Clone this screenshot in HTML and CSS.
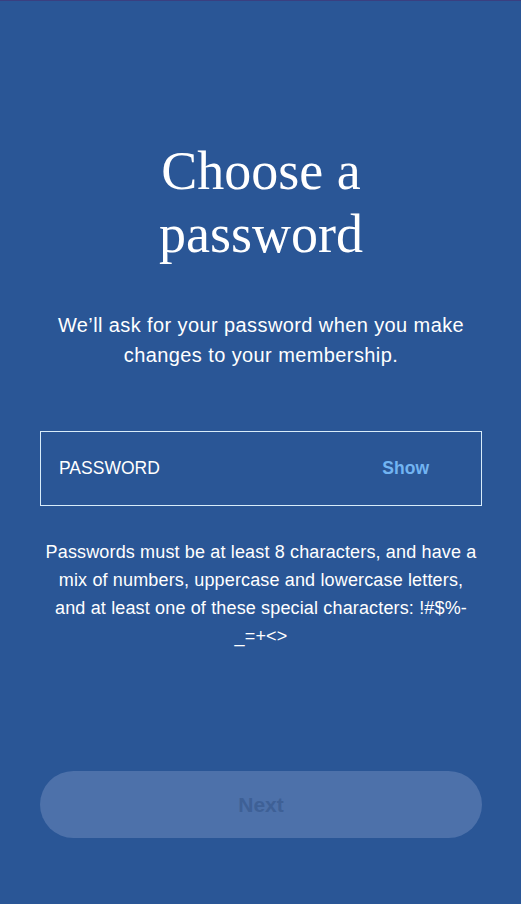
FILE: index.html
```html
<!DOCTYPE html>
<html>
<head>
<meta charset="utf-8">
<link rel="stylesheet" href="styles.css">
</head>
<body>
<main class="screen">
  <h1 class="title">Choose a<br>password</h1>
  <p class="lead">We’ll ask for your password when you make changes to your membership.</p>
  <div class="field">
    <span class="field-label">PASSWORD</span>
    <span class="field-show">Show</span>
  </div>
  <p class="hint">Passwords must be at least 8 characters, and have a mix of numbers, uppercase and lowercase letters, and at least one of these special characters: !#$%-<wbr>_=+&lt;&gt;</p>
  <div class="spacer"></div>
  <button class="next" type="button">Next</button>
</main>
</body>
</html>
```
FILE: styles.css
```css
html, body {
  margin: 0;
  padding: 0;
  background: #2a5696;
}
.screen {
  box-sizing: border-box;
  width: 521px;
  height: 904px;
  border-top: 1px solid #3a3f80;
  background: #2a5696;
  display: flex;
  flex-direction: column;
  align-items: center;
  padding: 139px 39px 0 40px;
  font-family: "Liberation Sans", Arial, sans-serif;
  color: #ffffff;
}
.title {
  margin: 0;
  font-family: "Liberation Serif", "Times New Roman", serif;
  font-weight: normal;
  font-size: 54px;
  line-height: 63px;
  text-align: center;
}
.lead {
  margin: 44px 0 0;
  width: 440px;
  font-size: 20px;
  letter-spacing: 0.4px;
  line-height: 30px;
  text-align: center;
}
.field {
  margin-top: 61px;
  box-sizing: border-box;
  width: 442px;
  height: 75px;
  border: 1.5px solid #d8ecfa;
  display: flex;
  align-items: center;
  justify-content: space-between;
  padding: 0 52px 0 18px;
}
.field-label {
  font-size: 17.5px;
}
.field-show {
  font-size: 17.5px;
  font-weight: bold;
  color: #72b4f2;
}
.hint {
  margin: 32px 0 0;
  width: 434px;
  font-size: 18px;
  letter-spacing: 0.15px;
  line-height: 28px;
  text-align: center;
}
.spacer {
  flex: 1;
}
.next {
  margin-bottom: 66px;
  width: 442px;
  height: 67px;
  border: none;
  border-radius: 34px;
  background: #4d71aa;
  color: #3e6096;
  font-family: "Liberation Sans", Arial, sans-serif;
  font-size: 21px;
  font-weight: bold;
}
```
